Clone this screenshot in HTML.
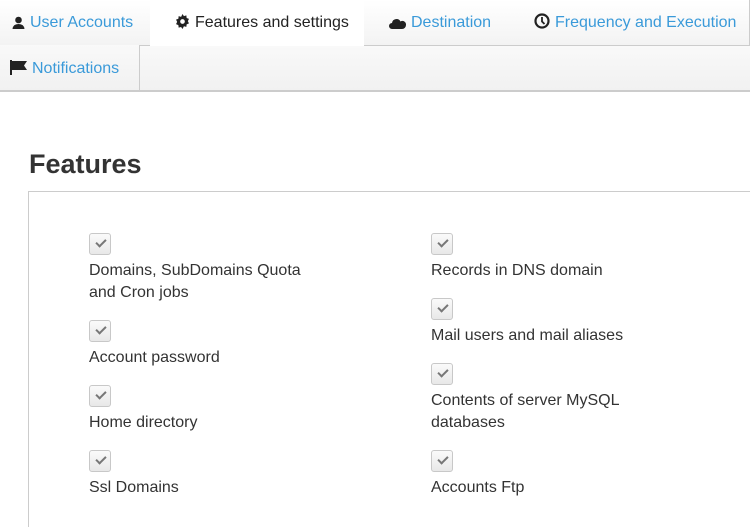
<!DOCTYPE html>
<html><head><style>
*{margin:0;padding:0;box-sizing:border-box}
html,body{width:750px;height:527px;overflow:hidden}
body{background:#fff;font-family:"Liberation Sans",sans-serif;font-size:16px;color:#333;position:relative}
.tab{position:absolute;height:46px;background:linear-gradient(#fff,#f3f3f3);border-right:1px solid #ccc;border-bottom:1px solid #ccc;color:#3a9ad9;line-height:46px;white-space:nowrap}
.tab svg{vertical-align:-2px;margin-right:5px}
.act{background:#fff;color:#222;border-bottom:none}
.row2{position:absolute;left:0;top:45px;width:750px;height:47px;background:linear-gradient(#f9f9f9,#f1f1f1);border-top:1px solid #ccc;border-bottom:2px solid #ccc}
h1{position:absolute;left:29px;top:149px;font-size:27px;font-weight:bold;color:#333}
.box{position:absolute;left:28px;top:191px;width:740px;height:340px;border:1px solid #ccc}
.cb{position:absolute;width:22px;height:22px;border:1px solid #c8c8c8;border-radius:3px;background:linear-gradient(#fafafa,#e8e8e8)}
.cb::after{content:"";position:absolute;left:6px;top:5px;width:8px;height:4px;border-left:2px solid #777;border-bottom:2px solid #777;transform:rotate(-45deg)}
.lb{position:absolute;line-height:22px;color:#333}
</style></head><body>
<div class="row2"></div>
<div class="tab" style="left:0;top:0;width:151px;padding-left:12px"><svg width="13" height="13" viewBox="0 0 13 13"><circle cx="6.5" cy="4" r="3.3" fill="#222"/><path d="M0.5 13 Q1 8 6.5 8 Q12 8 12.5 13Z" fill="#222"/></svg>User Accounts</div>
<div class="tab act" style="left:150px;top:0;width:215px;padding-left:25px"><svg width="15" height="15" viewBox="0 0 16 16"><path d="M8 0l1.5 2.2 2.6-.7.3 2.7 2.5 1-1.2 2.4 1.2 2.4-2.5 1-.3 2.7-2.6-.7L8 16l-1.5-2.2-2.6.7-.3-2.7-2.5-1L2.3 8.4 1.1 6l2.5-1 .3-2.7 2.6.7z" fill="#222"/><circle cx="8" cy="8" r="2.5" fill="#fff"/></svg>Features and settings</div>
<div class="tab" style="left:364px;top:0;width:146px;padding-left:25px"><svg width="17" height="11" viewBox="0 0 17 11"><path d="M3 11a3 3 0 010-6 4.5 4.5 0 018.5-1.5A3.6 3.6 0 0117 7a4 4 0 01-4 4z" fill="#222"/></svg>Destination</div>
<div class="tab" style="left:509px;top:0;width:241px;padding-left:25px"><svg width="16" height="16" viewBox="0 0 16 16"><circle cx="8" cy="8" r="6.5" fill="none" stroke="#222" stroke-width="2.2"/><path d="M8 4v4.5l2.5 2.5" fill="none" stroke="#222" stroke-width="1.8"/></svg>Frequency and Execution</div>
<div class="tab" style="left:0;top:45px;width:140px;height:47px;padding-left:10px;border-bottom:2px solid #ccc;line-height:47px;background:linear-gradient(#f9f9f9,#f1f1f1)"><svg width="17" height="15" viewBox="0 0 17 15"><rect x="0" y="0" width="2" height="15" fill="#222"/><path d="M2 1h15l-3 4.5 3 4.5H2z" fill="#222"/></svg>Notifications</div>
<h1>Features</h1>
<div class="box"></div>
<div class="cb" style="left:89px;top:233px"></div><div class="lb" style="left:89px;top:260px">Domains, SubDomains Quota<br>and Cron jobs</div>
<div class="cb" style="left:89px;top:320px"></div><div class="lb" style="left:89px;top:347px">Account password</div>
<div class="cb" style="left:89px;top:385px"></div><div class="lb" style="left:89px;top:412px">Home directory</div>
<div class="cb" style="left:89px;top:450px"></div><div class="lb" style="left:89px;top:477px">Ssl Domains</div>
<div class="cb" style="left:431px;top:233px"></div><div class="lb" style="left:431px;top:260px">Records in DNS domain</div>
<div class="cb" style="left:431px;top:298px"></div><div class="lb" style="left:431px;top:325px">Mail users and mail aliases</div>
<div class="cb" style="left:431px;top:363px"></div><div class="lb" style="left:431px;top:390px">Contents of server MySQL<br>databases</div>
<div class="cb" style="left:431px;top:450px"></div><div class="lb" style="left:431px;top:477px">Accounts Ftp</div>
</body></html>
